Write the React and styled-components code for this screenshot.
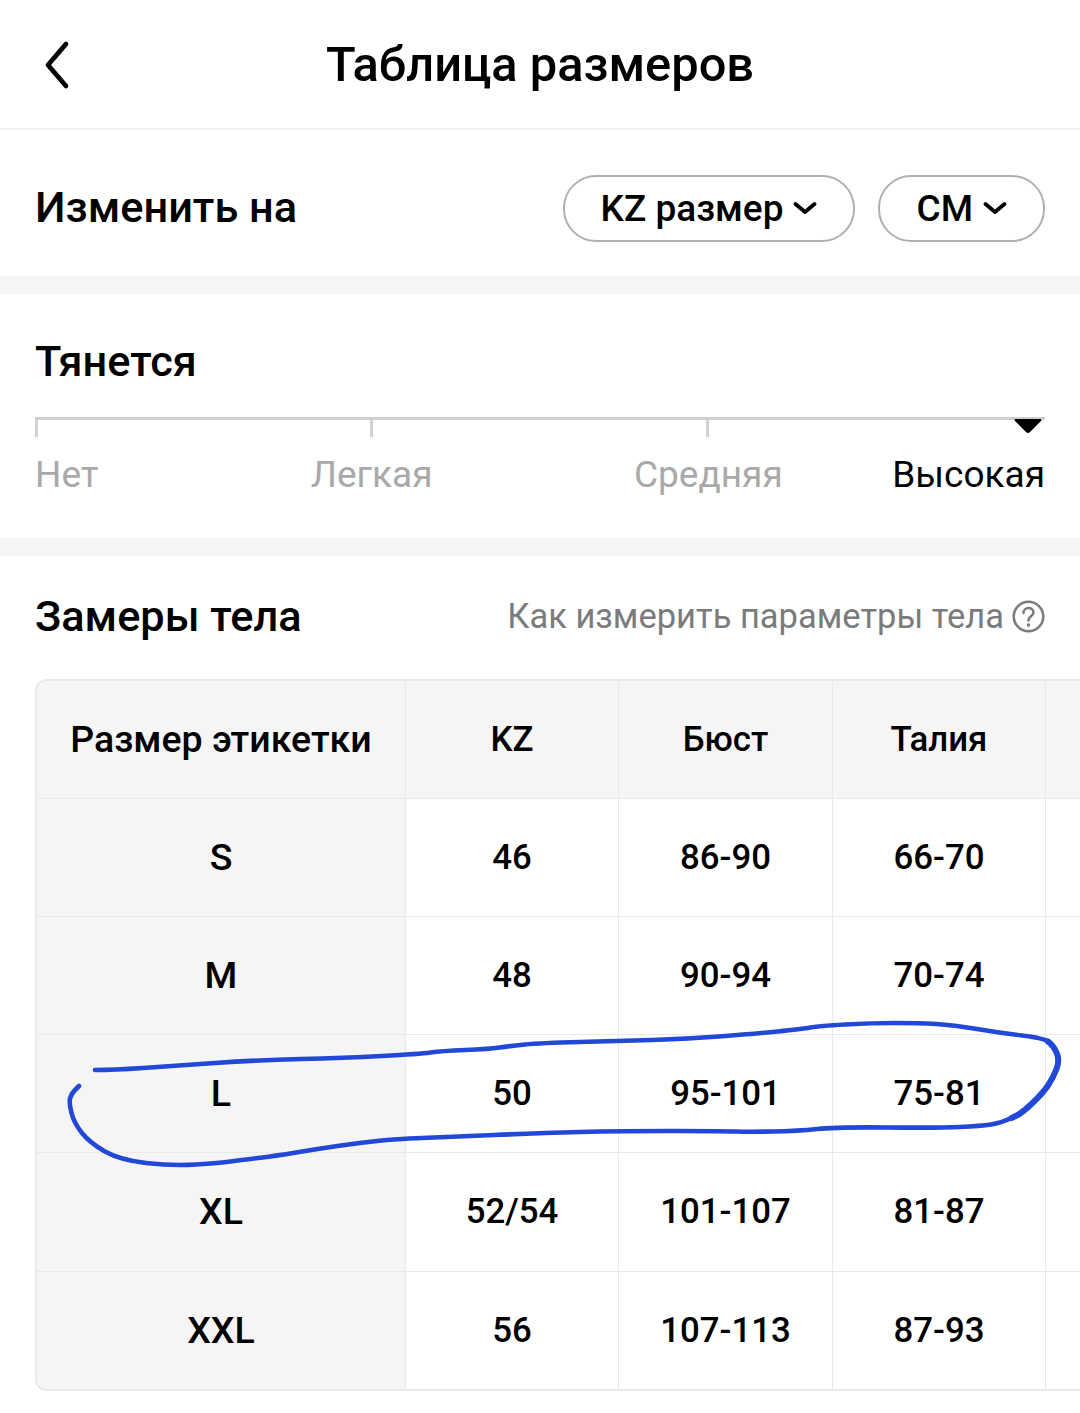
import React from 'react';
import styled, { createGlobalStyle } from 'styled-components';

const GlobalStyle = createGlobalStyle`
	html, body {
		margin: 0;
		padding: 0;
		background: #fff;
	}
	* {
		box-sizing: border-box;
	}
`;

// * Page ////////////////
const Page = styled.div`
	position: relative;
	width: 1080px;
	height: 1413px;
	overflow: hidden;
	background: #fff;
	color: #000;
	font-family: Roboto, 'Liberation Sans', sans-serif;
`;

// * Header ////////////////
const Header = styled.header`
	position: relative;
	height: 130px;
	display: flex;
	align-items: center;
	justify-content: center;
	border-bottom: 2px solid #f1f1f1;
`;

const BackIcon = styled.svg`
	position: absolute;
	left: 40px;
	top: 38px;
`;

const Title = styled.h1`
	margin: 3px 0 0;
	font-size: 48.800px;
	font-weight: 500;
	line-height: 1;
`;

// * Sections ////////////////
const Section = styled.section`
	border-bottom: 18px solid #f5f5f5;
	padding: 0 35px;
`;

const SwitchRow = styled(Section)`
	height: 164px;
	padding-top: 10px;
	display: flex;
	align-items: center;
	justify-content: space-between;
`;

const Heading = styled.h2`
	margin: 0;
	font-size: 43.300px;
	font-weight: 500;
	line-height: 1;
`;

const Pills = styled.div`
	display: flex;
	gap: 23px;
`;

const Pill = styled.button`
	height: 67px;
	padding: 0 36px;
	display: flex;
	align-items: center;
	gap: 10px;
	background: #fff;
	border: 2px solid #b0b0b0;
	border-radius: 33px;
	color: #000;
	font-family: inherit;
	font-size: 37px;
	font-weight: 500;
`;

// * Stretch ruler ////////////////
const StretchSection = styled(Section)`
	height: 262px;
	padding-top: 46px;
`;

const Ruler = styled.div`
	position: relative;
	margin-top: 34px;
	height: 20px;
	display: grid;
	grid-template-columns: repeat(3, 1fr);
	border-top: 3px solid #cfcfcf;
`;

const Tick = styled.span`
	border-left: 3px solid #d2d2d2;
	margin-left: ${(props) => (props.first ? 0 : -2)}px;
`;

const Marker = styled.svg`
	position: absolute;
	right: 2px;
	top: -1px;
`;

const StretchLabels = styled.div`
	margin-top: 16px;
	display: grid;
	grid-template-columns: repeat(6, 1fr);
`;

const StretchLabel = styled.span`
	grid-column: span ${(props) => props.span || 1};
	text-align: ${(props) => props.align || 'center'};
	white-space: nowrap;
	font-size: 37px;
	line-height: 44px;
	color: ${(props) => (props.active ? '#000' : '#a9a9a9')};
`;

// * Body measurements ////////////////
const MeasureSection = styled.section`
	padding-left: 35px;
`;

const MeasureHead = styled.div`
	padding-top: 39px;
	padding-right: 35px;
	height: 123px;
	display: flex;
	align-items: flex-start;
	justify-content: space-between;
`;

const HowTo = styled.div`
	display: flex;
	align-items: center;
	gap: 8px;
	height: 42px;
	font-size: 34.500px;
	color: #7b7b7b;
`;

const Table = styled.div`
	width: 1045px;
	border: 2px solid #e9e9e9;
	border-right: none;
	border-radius: 12px 0 0 12px;
	overflow: hidden;
`;

const Row = styled.div`
	display: grid;
	grid-template-columns: 369px 213px 214px 213px 1fr;
	height: ${(props) => props.h}px;
	border-top: ${(props) => (props.first ? 'none' : '1px solid #e9e9e9')};
`;

const Cell = styled.div`
	display: flex;
	align-items: center;
	justify-content: center;
	padding-bottom: 2px;
	border-right: 1px solid #e9e9e9;
	background: ${(props) => (props.shaded ? '#f5f5f5' : 'transparent')};
	font-size: ${(props) => (props.wide ? 37.500 : 34.800)}px;
	font-weight: 500;
	white-space: nowrap;

	&:last-child {
		border-right: none;
	}
`;

// * Hand drawn marker over the L row ////////////////
const Scribble = styled.svg`
	position: absolute;
	left: 0;
	top: 0;
	pointer-events: none;
`;

const scribblePoints = [
	[95, 1070], [114, 1070], [172, 1066], [258, 1060], [344, 1058], [420, 1054], [441, 1051], [489, 1049],
	[510, 1046], [540, 1043], [619, 1041], [685, 1039], [753, 1034], [802, 1029], [819, 1026], [871, 1023],
	[919, 1023], [953, 1025], [1001, 1033], [1043, 1038], [1053, 1045], [1060, 1060], [1053, 1078], [1043, 1093],
	[1022, 1113], [1001, 1123], [981, 1126], [939, 1128], [836, 1127], [798, 1131], [747, 1132], [726, 1131],
	[619, 1131], [540, 1133], [448, 1137], [396, 1139], [358, 1143], [317, 1149], [275, 1156], [241, 1160],
	[220, 1163], [172, 1166], [120, 1160], [90, 1143], [74, 1123], [69, 1103], [71, 1094], [79, 1086],
];

// the pen gets heavier round the right hand turn
const heavyPoints = [
	[1048, 1041.500], [1053, 1045], [1060, 1060], [1053, 1078], [1043, 1093], [1022, 1113], [1011.500, 1118],
];

const smoothPath = (pts) => {
	let d = `M${pts[0][0]} ${pts[0][1]}`;
	for (let i = 1; i < pts.length - 1; i++) {
		const mx = (pts[i][0] + pts[i + 1][0]) / 2;
		const my = (pts[i][1] + pts[i + 1][1]) / 2;
		d += ` Q${pts[i][0]} ${pts[i][1]} ${mx} ${my}`;
	}
	const last = pts[pts.length - 1];
	return `${d} L${last[0]} ${last[1]}`;
};

const Chevron = () => (
	<svg width="24" height="14" viewBox="0 0 24 14" fill="none">
		<path d="M2.500 3 L12 11 L21.500 3" stroke="#000" strokeWidth="3.800" strokeLinecap="round" strokeLinejoin="round" />
	</svg>
);

const rows = [
	['S', '46', '86-90', '66-70'],
	['M', '48', '90-94', '70-74'],
	['L', '50', '95-101', '75-81'],
	['XL', '52/54', '101-107', '81-87'],
	['XXL', '56', '107-113', '87-93'],
];
const heights = [118, 118, 118, 119, 118];

export default function App() {
	return (
		<Page>
			<GlobalStyle />
			<Header>
				<BackIcon width="36" height="54" viewBox="0 0 36 54" fill="none">
					<path d="M26 6 L8 27 L26 48" stroke="#000" strokeWidth="4.800" strokeLinecap="round" strokeLinejoin="round" />
				</BackIcon>
				<Title>Таблица размеров</Title>
			</Header>

			<SwitchRow as="section">
				<Heading>Изменить на</Heading>
				<Pills>
					<Pill>
						KZ размер
						<Chevron />
					</Pill>
					<Pill>
						CM
						<Chevron />
					</Pill>
				</Pills>
			</SwitchRow>

			<StretchSection>
				<Heading>Тянется</Heading>
				<Ruler>
					<Tick first />
					<Tick />
					<Tick />
					<Marker width="30" height="15" viewBox="0 0 30 15">
						<path d="M3 0 H27 Q29.500 0 28 2 L17 13 Q15 15 13 13 L2 2 Q0.500 0 3 0 Z" fill="#000" />
					</Marker>
				</Ruler>
				<StretchLabels>
					<StretchLabel align="left">Нет</StretchLabel>
					<StretchLabel span={2}>Легкая</StretchLabel>
					<StretchLabel span={2}>Средняя</StretchLabel>
					<StretchLabel align="right" active>
						Высокая
					</StretchLabel>
				</StretchLabels>
			</StretchSection>

			<MeasureSection>
				<MeasureHead>
					<Heading>Замеры тела</Heading>
					<HowTo>
						Как измерить параметры тела
						<svg width="33" height="33" viewBox="0 0 33 33" fill="none">
							<circle cx="16.500" cy="16.500" r="14.800" stroke="#7b7b7b" strokeWidth="2.500" />
							<path d="M11.500 13 C11.500 6.500 21.500 6.500 21.500 12.500 C21.500 16 16.500 16 16.500 20.500" stroke="#7b7b7b" strokeWidth="2.500" strokeLinecap="round" />
							<circle cx="16.500" cy="25" r="1.700" fill="#7b7b7b" />
						</svg>
					</HowTo>
				</MeasureHead>
				<Table>
					<Row first h={117}>
						<Cell shaded wide>Размер этикетки</Cell>
						<Cell shaded>KZ</Cell>
						<Cell shaded>Бюст</Cell>
						<Cell shaded>Талия</Cell>
						<Cell shaded />
					</Row>
					{rows.map((row, i) => (
						<Row key={row[0]} h={heights[i]}>
							<Cell shaded wide>{row[0]}</Cell>
							<Cell>{row[1]}</Cell>
							<Cell>{row[2]}</Cell>
							<Cell>{row[3]}</Cell>
							<Cell />
						</Row>
					))}
				</Table>
			</MeasureSection>

			<Scribble width="1080" height="1413" viewBox="0 0 1080 1413" fill="none">
				<path d={smoothPath(scribblePoints)} stroke="#2148d6" strokeWidth="4.600" strokeLinecap="round" strokeLinejoin="round" />
				<path d={smoothPath(heavyPoints)} stroke="#2148d6" strokeWidth="6" strokeLinecap="round" strokeLinejoin="round" />
			</Scribble>
		</Page>
	);
}
